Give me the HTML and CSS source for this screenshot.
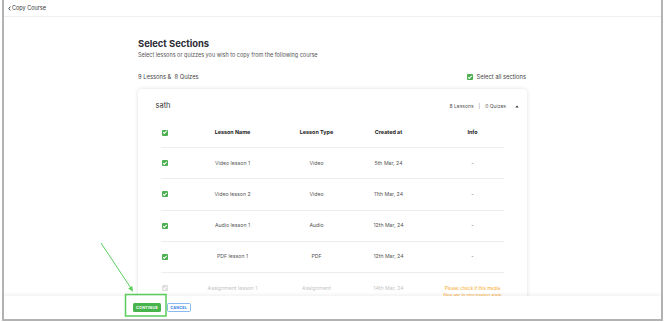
FILE: index.html
```html
<!DOCTYPE html>
<html lang="en">
<head>
<meta charset="utf-8">
<title>Copy Course</title>
<link rel="stylesheet" href="styles.css">
</head>
<body>
<div class="frame">
  <header class="topbar">
    <svg class="back" width="3" height="5" viewBox="0 0 3 5"><path d="M2.4 0.6 L0.8 2.5 L2.4 4.4" fill="none" stroke="#333" stroke-width="0.9"/></svg>
    <span>Copy Course</span>
  </header>
  <main class="main">
    <div class="wrap">
      <h1 class="title">Select Sections</h1>
      <p class="sub">Select lessons or quizzes you wish to copy from the following course</p>
      <div class="summary">
        <span>9 Lessons &amp;&nbsp; 8 Quizes</span>
        <span class="select-all"><span class="cb"></span>Select all sections</span>
      </div>
      <section class="card">
        <div class="card-head">
          <span class="sec-name">sath</span>
          <div class="counts">
            <span>8 Lessons</span><span class="sep">|</span><span>0 Quizes</span>
            <svg class="caret" width="4" height="3" viewBox="0 0 4 3"><path d="M0.3 2.6 L2 0.6 L3.7 2.6 Z" fill="#333"/></svg>
          </div>
        </div>
        <div class="grid">
          <div class="row head">
            <span class="c-cb"><span class="cb"></span></span>
            <span>Lesson Name</span><span>Lesson Type</span><span>Created at</span><span class="info">Info</span>
          </div>
          <div class="row">
            <span class="c-cb"><span class="cb"></span></span>
            <span>Video lesson 1</span><span>Video</span><span>5th Mar, 24</span><span class="info">-</span>
          </div>
          <div class="row">
            <span class="c-cb"><span class="cb"></span></span>
            <span>Video lesson 2</span><span>Video</span><span>11th Mar, 24</span><span class="info">-</span>
          </div>
          <div class="row">
            <span class="c-cb"><span class="cb"></span></span>
            <span>Audio lesson 1</span><span>Audio</span><span>12th Mar, 24</span><span class="info">-</span>
          </div>
          <div class="row">
            <span class="c-cb"><span class="cb"></span></span>
            <span>PDF lesson 1</span><span>PDF</span><span>12th Mar, 24</span><span class="info">-</span>
          </div>
          <div class="row disabled">
            <span class="c-cb"><span class="cb off"></span></span>
            <span>Assignment lesson 1</span><span>Assignment</span><span>14th Mar, 24</span><span class="info warn">Please check if this media<br>files are in processing state</span>
          </div>
        </div>
      </section>
    </div>
  </main>
  <footer class="footer">
    <button class="btn primary">CONTINUE</button>
    <button class="btn outline">CANCEL</button>
  </footer>
</div>
<svg class="annot" width="670" height="322" viewBox="0 0 670 322">
  <line x1="101" y1="243" x2="130.5" y2="287.5" stroke="#5acd5a" stroke-width="1"/>
  <polygon points="133,291.8 128.2,288.6 132.3,285.9" fill="#5acd5a"/>
  <rect x="125.5" y="294.5" width="40.5" height="21.5" fill="none" stroke="#5acd5a" stroke-width="1.5"/>
</svg>
</body>
</html>
```

FILE: styles.css
```css
* { box-sizing: border-box; }
html, body { margin: 0; background: #fff; }
body {
  font-family: Inter, "Noto Sans", sans-serif;
  color: #333;
  width: 670px;
  height: 322px;
  overflow: hidden;
  position: relative;
}
.frame {
  margin-left: 2px;
  width: 661px;
  height: 321px;
  border: 2px solid #b3b3b3;
  border-top: 0;
  display: flex;
  flex-direction: column;
  background: #fff;
}
.topbar {
  height: 17px;
  flex: none;
  border-bottom: 1px solid #efefef;
  display: flex;
  align-items: center;
  gap: 1px;
  padding-left: 4px;
  font-size: 5.5px;
  color: #333;
}
.main {
  flex: 1;
  overflow: hidden;
  padding-top: 21px;
}
.wrap {
  width: 389px;
  margin: 0 auto;
}
.title {
  margin: 0;
  font-size: 9.4px;
  line-height: 12px;
  font-weight: 700;
  color: #2b2b35;
}
.sub {
  margin: 1px 0 0;
  font-size: 5.5px;
  line-height: 8px;
  color: #555;
}
.summary {
  margin-top: 14px;
  display: flex;
  justify-content: space-between;
  align-items: center;
  font-size: 5.8px;
  line-height: 8px;
  color: #444;
}
.select-all {
  display: flex;
  align-items: center;
  gap: 4px;
  padding-right: 1px;
}
.cb {
  display: block;
  width: 6px;
  height: 6px;
  border-radius: 1px;
  background: #4cb050;
  position: relative;
  flex: none;
}
.cb::after {
  content: "";
  position: absolute;
  left: 2.1px;
  top: 0.9px;
  width: 1.3px;
  height: 2.8px;
  border: solid #fff;
  border-width: 0 0.8px 0.8px 0;
  transform: rotate(45deg);
}
.cb.off { background: #dedede; }
.card {
  margin-top: 8px;
  border-radius: 4px;
  box-shadow: 0 0 4px rgba(0, 0, 0, 0.13);
  background: #fff;
  padding-bottom: 20px;
}
.card-head {
  display: flex;
  justify-content: space-between;
  align-items: center;
  padding: 12px 8px 5px 17.5px;
}
.sec-name {
  font-size: 7.5px;
  line-height: 10px;
  color: #333;
}
.counts {
  display: flex;
  align-items: center;
  font-size: 5px;
  color: #555;
}
.sep { margin: 0 5px; color: #888; }
.caret { margin-left: 9px; }
.grid {
  margin: 0 23px 0 22.5px;
}
.row {
  display: grid;
  grid-template-columns: 24px 96px 72px 72px 80px;
  border-bottom: 1px solid #ededed;
  padding: 11.65px 0;
  line-height: 7px;
  font-size: 5.2px;
  color: #555;
  align-items: start;
}
.row > span { text-align: center; }
.row > .c-cb { text-align: left; padding-left: 1.5px; padding-top: 0.5px; }
.row .info { margin-left: 16px; }
.row.head {
  padding: 13px 0 11px;
  font-weight: 700;
  color: #222;
  font-size: 5.4px;
}
.row.disabled { color: #c4c4c4; }
.row .warn {
  color: #f5a623;
  font-size: 4.5px;
  white-space: nowrap;
  justify-self: center;
}
.footer {
  height: 23px;
  flex: none;
  display: flex;
  align-items: center;
  gap: 6px;
  padding-left: 129px;
  box-shadow: 0 -2px 3px rgba(0, 0, 0, 0.05);
  position: relative;
  background: #fff;
}
.btn {
  height: 9px;
  font-family: inherit;
  font-size: 3.8px;
  font-weight: 700;
  letter-spacing: 0.2px;
  border-radius: 1.5px;
  padding: 0;
  display: flex;
  align-items: center;
  justify-content: center;
}
.primary {
  width: 28px;
  background: #47b34b;
  color: #fff;
  border: 0;
}
.outline {
  width: 23.5px;
  background: #fff;
  color: #2f80ed;
  border: 0.8px solid #8ab8f0;
}
.annot {
  position: absolute;
  left: 0;
  top: 0;
  pointer-events: none;
}
```
